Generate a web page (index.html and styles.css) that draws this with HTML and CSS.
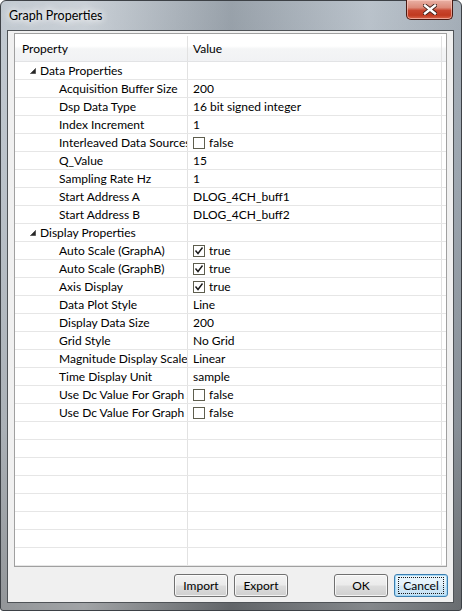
FILE: index.html
```html
<!DOCTYPE html>
<html lang="en">
<head>
    <meta charset="UTF-8">
    <title>Graph Properties</title>
    <link rel="stylesheet" href="styles.css">
</head>
<body>

<div class="window">
    <div class="titlebar">
        <span class="title">Graph Properties</span>
        <button class="close-button" title="Close">
            <svg width="14" height="11" viewBox="0 0 14 11">
                <path d="M2 1.5 L12 9.5 M12 1.5 L2 9.5" stroke="#3b1d17" stroke-width="4.2" stroke-linecap="square"/>
                <path d="M2 1.5 L12 9.5 M12 1.5 L2 9.5" stroke="#ffffff" stroke-width="2.4" stroke-linecap="square"/>
            </svg>
        </button>
    </div>

    <div class="client">
        <div class="grid">
            <div class="grid-head">
                <div class="cell name">Property</div>
                <div class="cell value">Value</div>
                <div class="cell filler"></div>
            </div>

            <div class="grid-body">
                <div class="row category">
                    <div class="cell name"><span class="expander"><svg width="6" height="6" viewBox="0 0 6 6"><polygon points="5.5,0.5 5.5,5.5 0.5,5.5" fill="#262626" stroke="#595959" stroke-width="1"/></svg></span>Data Properties</div>
                    <div class="cell value"></div>
                    <div class="cell filler"></div>
                </div>
                <div class="row">
                    <div class="cell name">Acquisition Buffer Size</div>
                    <div class="cell value">200</div>
                    <div class="cell filler"></div>
                </div>
                <div class="row">
                    <div class="cell name">Dsp Data Type</div>
                    <div class="cell value">16 bit signed integer</div>
                    <div class="cell filler"></div>
                </div>
                <div class="row">
                    <div class="cell name">Index Increment</div>
                    <div class="cell value">1</div>
                    <div class="cell filler"></div>
                </div>
                <div class="row">
                    <div class="cell name">Interleaved Data Sources</div>
                    <div class="cell value"><span class="checkbox"></span>false</div>
                    <div class="cell filler"></div>
                </div>
                <div class="row">
                    <div class="cell name">Q_Value</div>
                    <div class="cell value">15</div>
                    <div class="cell filler"></div>
                </div>
                <div class="row">
                    <div class="cell name">Sampling Rate Hz</div>
                    <div class="cell value">1</div>
                    <div class="cell filler"></div>
                </div>
                <div class="row">
                    <div class="cell name">Start Address A</div>
                    <div class="cell value">DLOG_4CH_buff1</div>
                    <div class="cell filler"></div>
                </div>
                <div class="row">
                    <div class="cell name">Start Address B</div>
                    <div class="cell value">DLOG_4CH_buff2</div>
                    <div class="cell filler"></div>
                </div>

                <div class="row category">
                    <div class="cell name"><span class="expander"><svg width="6" height="6" viewBox="0 0 6 6"><polygon points="5.5,0.5 5.5,5.5 0.5,5.5" fill="#262626" stroke="#595959" stroke-width="1"/></svg></span>Display Properties</div>
                    <div class="cell value"></div>
                    <div class="cell filler"></div>
                </div>
                <div class="row">
                    <div class="cell name">Auto Scale (GraphA)</div>
                    <div class="cell value"><span class="checkbox checked"><svg width="10" height="10" viewBox="0 0 10 10"><path d="M1.5 4.5 L4 7.5 L8.5 1.5" fill="none" stroke="#1a1a1a" stroke-width="1.4"/></svg></span>true</div>
                    <div class="cell filler"></div>
                </div>
                <div class="row">
                    <div class="cell name">Auto Scale (GraphB)</div>
                    <div class="cell value"><span class="checkbox checked"><svg width="10" height="10" viewBox="0 0 10 10"><path d="M1.5 4.5 L4 7.5 L8.5 1.5" fill="none" stroke="#1a1a1a" stroke-width="1.4"/></svg></span>true</div>
                    <div class="cell filler"></div>
                </div>
                <div class="row">
                    <div class="cell name">Axis Display</div>
                    <div class="cell value"><span class="checkbox checked"><svg width="10" height="10" viewBox="0 0 10 10"><path d="M1.5 4.5 L4 7.5 L8.5 1.5" fill="none" stroke="#1a1a1a" stroke-width="1.4"/></svg></span>true</div>
                    <div class="cell filler"></div>
                </div>
                <div class="row">
                    <div class="cell name">Data Plot Style</div>
                    <div class="cell value">Line</div>
                    <div class="cell filler"></div>
                </div>
                <div class="row">
                    <div class="cell name">Display Data Size</div>
                    <div class="cell value">200</div>
                    <div class="cell filler"></div>
                </div>
                <div class="row">
                    <div class="cell name">Grid Style</div>
                    <div class="cell value">No Grid</div>
                    <div class="cell filler"></div>
                </div>
                <div class="row">
                    <div class="cell name">Magnitude Display Scale</div>
                    <div class="cell value">Linear</div>
                    <div class="cell filler"></div>
                </div>
                <div class="row">
                    <div class="cell name">Time Display Unit</div>
                    <div class="cell value">sample</div>
                    <div class="cell filler"></div>
                </div>
                <div class="row">
                    <div class="cell name">Use Dc Value For Graph A</div>
                    <div class="cell value"><span class="checkbox"></span>false</div>
                    <div class="cell filler"></div>
                </div>
                <div class="row">
                    <div class="cell name">Use Dc Value For Graph B</div>
                    <div class="cell value"><span class="checkbox"></span>false</div>
                    <div class="cell filler"></div>
                </div>

                <!-- empty rows fill the rest of the list -->
                <div class="row empty"><div class="cell name"></div><div class="cell value"></div><div class="cell filler"></div></div>
                <div class="row empty"><div class="cell name"></div><div class="cell value"></div><div class="cell filler"></div></div>
                <div class="row empty"><div class="cell name"></div><div class="cell value"></div><div class="cell filler"></div></div>
                <div class="row empty"><div class="cell name"></div><div class="cell value"></div><div class="cell filler"></div></div>
                <div class="row empty"><div class="cell name"></div><div class="cell value"></div><div class="cell filler"></div></div>
                <div class="row empty"><div class="cell name"></div><div class="cell value"></div><div class="cell filler"></div></div>
                <div class="row empty"><div class="cell name"></div><div class="cell value"></div><div class="cell filler"></div></div>
                <div class="row empty"><div class="cell name"></div><div class="cell value"></div><div class="cell filler"></div></div>
            </div>
        </div>

        <div class="buttons">
            <button class="button">Import</button>
            <button class="button">Export</button>
            <button class="button ok">OK</button>
            <button class="button default"><span class="focus">Cancel</span></button>
        </div>
    </div>
</div>

</body>
</html>
```

FILE: styles.css
```css
/* Reset some styles */
* {
    margin: 0;
    padding: 0;
    box-sizing: border-box;
}

body {
    font-family: 'Lato', 'Noto Sans', sans-serif;
    font-size: 12px;
    background-color: #ffffff;
    color: #000000;
}

/* Aero style window frame */
.window {
    width: 462px;
    height: 611px;
    display: flex;
    flex-direction: column;
    padding: 0 7px 7px 6px;
    border: 1px solid #3d4146;
    border-radius: 6px 6px 3px 3px;
    background:
        linear-gradient(90deg, rgba(255, 255, 255, 0.25) 0%, rgba(255, 255, 255, 0.35) 18%, rgba(0, 0, 0, 0.12) 50%, rgba(255, 255, 255, 0.15) 80%, rgba(0, 0, 0, 0.05) 100%),
        linear-gradient(180deg, #aeb8c2 0%, #a3adb7 30%, #8e969e 70%, #6e7276 100%);
}

.titlebar {
    height: 29px;
    display: flex;
    align-items: flex-start;
    justify-content: space-between;
}

.title {
    margin-top: 7px;
    margin-left: 2px;
    font-size: 12.5px;
    color: #000000;
    text-shadow: 0 0 6px #ffffff, 0 0 10px rgba(255, 255, 255, 0.9), 0 0 14px rgba(255, 255, 255, 0.7);
}

.close-button {
    width: 47px;
    height: 20px;
    margin-top: -1px;
    margin-right: 1px;
    display: flex;
    align-items: center;
    justify-content: center;
    border: 1px solid #4a1a12;
    border-top: none;
    border-radius: 0 0 5px 5px;
    background: linear-gradient(180deg, #e9b1a5 0%, #dc8a79 40%, #c8462f 55%, #c0391f 80%, #d9664c 100%);
    box-shadow: inset 0 0 0 1px rgba(255, 210, 200, 0.6);
}

/* Dialog client area */
.client {
    flex: 1;
    display: flex;
    flex-direction: column;
    padding: 2px 6px 5px 6px;
    background-color: #f0f0f0;
    border: 1px solid #4f5357;
}

.grid {
    height: 534px;
    display: flex;
    flex-direction: column;
    border: 1px solid #a0a0a0;
    background-color: #ffffff;
    overflow: hidden;
}

.grid-head {
    height: 28px;
    flex: none;
    display: flex;
    padding-top: 2px;
    border-bottom: 1px solid #e2e3e5;
    background: linear-gradient(180deg, #ffffff 0%, #ffffff 45%, #f4f5f6 55%, #f1f2f4 100%);
}

.grid-head .cell {
    line-height: 25px;
    padding-top: 0;
}

.grid-body {
    flex: 1;
    overflow: hidden;
}

.row {
    height: 18px;
    display: flex;
    border-bottom: 1px solid #e6e6e6;
}

.cell {
    white-space: nowrap;
    overflow: hidden;
    line-height: 16px;
    padding-top: 1px;
    display: flex;
    align-items: center;
}

.cell.name {
    width: 173px;
    flex: none;
    padding-left: 44px;
    border-right: 1px solid #e2e2e2;
}

.grid-head .cell.name {
    padding-left: 7px;
}

.cell.value {
    width: 254px;
    flex: none;
    padding-left: 5px;
    border-right: 1px solid #e2e2e2;
}

.cell.filler {
    flex: 1;
}

.category .cell.name {
    padding-left: 10px;
}

.expander {
    width: 15px;
    height: 16px;
    flex: none;
    display: flex;
    align-items: center;
    justify-content: center;
}

.checkbox {
    width: 12px;
    height: 12px;
    flex: none;
    margin-right: 4px;
    display: flex;
    align-items: center;
    justify-content: center;
    border: 1px solid #5e5e4e;
    background-color: #ffffff;
}

/* Bottom buttons */
.buttons {
    display: flex;
    justify-content: flex-end;
    gap: 6px;
    padding-top: 7px;
    margin-right: -1px;
}

.button {
    width: 54px;
    height: 23px;
    font-family: inherit;
    font-size: 12px;
    color: #000000;
    border: 1px solid #707070;
    border-radius: 3px;
    background: linear-gradient(180deg, #f2f2f2 0%, #ebebeb 49%, #dddddd 51%, #cfcfcf 100%);
    box-shadow: inset 0 0 0 1px rgba(255, 255, 255, 0.75);
    display: flex;
    align-items: center;
    justify-content: center;
}

.button.ok {
    margin-left: 40px;
}

.button.default {
    border-color: #3c7fb1;
    background: linear-gradient(180deg, #eaf6fd 0%, #e4f1fa 49%, #d3e9f7 51%, #c5e1f4 100%);
    box-shadow: inset 0 0 0 1px #a7d9f5;
}

.focus {
    width: 46px;
    height: 17px;
    display: flex;
    align-items: center;
    justify-content: center;
    border: 1px dotted #1a1a1a;
}
```
